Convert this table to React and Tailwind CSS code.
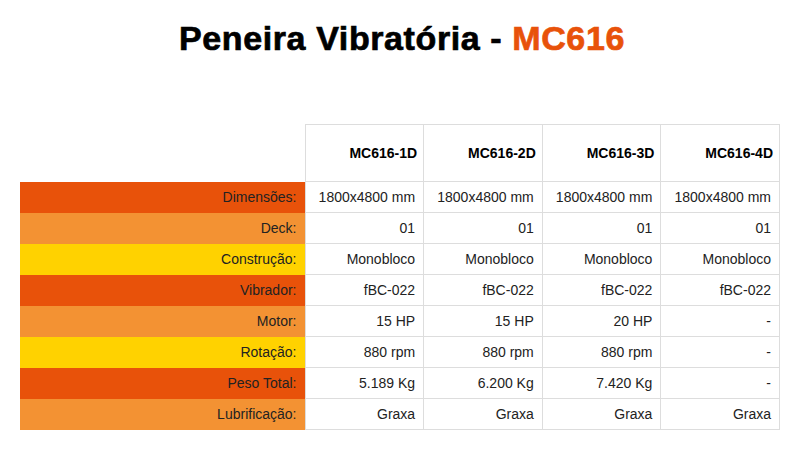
import React from 'react';

const models = ['MC616-1D', 'MC616-2D', 'MC616-3D', 'MC616-4D'];

const rows = [
    { label: 'Dimensões:', color: 'bg-[#e8520a]', values: ['1800x4800 mm', '1800x4800 mm', '1800x4800 mm', '1800x4800 mm'] },
    { label: 'Deck:', color: 'bg-[#f39233]', values: ['01', '01', '01', '01'] },
    { label: 'Construção:', color: 'bg-[#ffd200]', values: ['Monobloco', 'Monobloco', 'Monobloco', 'Monobloco'] },
    { label: 'Vibrador:', color: 'bg-[#e8520a]', values: ['fBC-022', 'fBC-022', 'fBC-022', 'fBC-022'] },
    { label: 'Motor:', color: 'bg-[#f39233]', values: ['15 HP', '15 HP', '20 HP', '-'] },
    { label: 'Rotação:', color: 'bg-[#ffd200]', values: ['880 rpm', '880 rpm', '880 rpm', '-'] },
    { label: 'Peso Total:', color: 'bg-[#e8520a]', values: ['5.189 Kg', '6.200 Kg', '7.420 Kg', '-'] },
    { label: 'Lubrificação:', color: 'bg-[#f39233]', values: ['Graxa', 'Graxa', 'Graxa', 'Graxa'] },
];

const App = () => {
    return (
        <div className="w-[804px] h-[456px] bg-white px-5 pt-[18px]" style={{ fontFamily: '"Liberation Sans", Arial, sans-serif' }}>
            <h1 className="text-center text-[34px] font-bold leading-[40px] tracking-[0.6px] text-black [-webkit-text-stroke:0.7px_currentColor]">
                Peneira Vibratória - <span className="text-[#e8520a]">MC616</span>
            </h1>
            <table className="mt-[66px] w-[760px] table-fixed border-collapse text-[14px] text-[#222]">
                <colgroup>
                    <col className="w-[285px]" />
                    <col />
                    <col />
                    <col />
                    <col />
                </colgroup>
                <thead>
                    <tr className="h-[57px]">
                        <th className="border-0"></th>
                        {models.map((m) => (
                            <th key={m} className="border border-[#ddd] pr-[6px] text-right font-bold text-black">{m}</th>
                        ))}
                    </tr>
                </thead>
                <tbody>
                    {rows.map((row) => (
                        <tr key={row.label} className="h-[31px]">
                            <td className={`${row.color} pr-2 text-right`}>{row.label}</td>
                            {row.values.map((v, i) => (
                                <td key={i} className="border border-[#ddd] pr-2 text-right">{v}</td>
                            ))}
                        </tr>
                    ))}
                </tbody>
            </table>
        </div>
    );
};

export default App;
